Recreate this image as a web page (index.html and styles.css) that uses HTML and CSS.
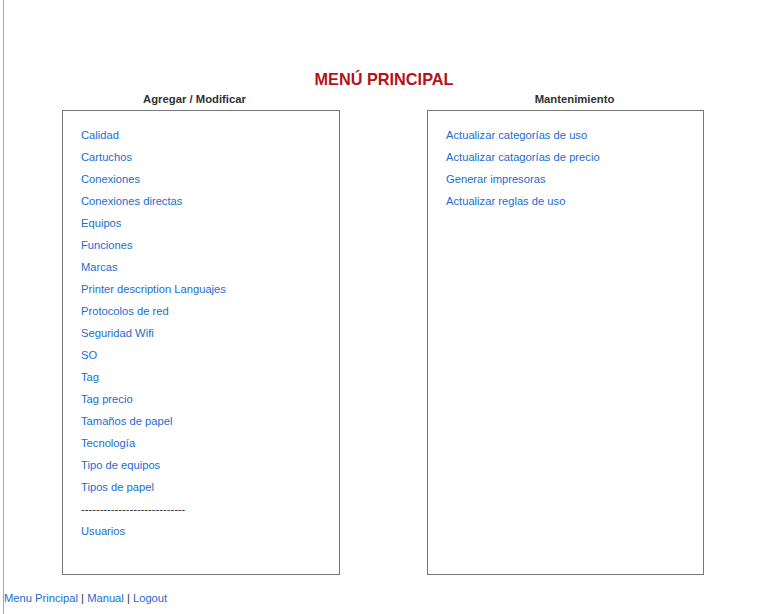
FILE: index.html
```html
<!DOCTYPE html>
<html lang="es">
<head>
<meta charset="utf-8">
<title>Menú principal</title>
<link rel="stylesheet" href="styles.css">
</head>
<body>
<div class="page">
  <h1 class="title">MENÚ PRINCIPAL</h1>
  <div class="columns">
    <h2 class="col-head">Agregar / Modificar</h2>
    <h2 class="col-head">Mantenimiento</h2>
    <div class="box box-left">
      <ul class="menu">
        <li><a href="#">Calidad</a></li>
        <li><a href="#">Cartuchos</a></li>
        <li><a href="#">Conexiones</a></li>
        <li><a href="#">Conexiones directas</a></li>
        <li><a href="#">Equipos</a></li>
        <li><a href="#">Funciones</a></li>
        <li><a href="#">Marcas</a></li>
        <li><a href="#">Printer description Languajes</a></li>
        <li><a href="#">Protocolos de red</a></li>
        <li><a href="#">Seguridad Wifi</a></li>
        <li><a href="#">SO</a></li>
        <li><a href="#">Tag</a></li>
        <li><a href="#">Tag precio</a></li>
        <li><a href="#">Tamaños de papel</a></li>
        <li><a href="#">Tecnología</a></li>
        <li><a href="#">Tipo de equipos</a></li>
        <li><a href="#">Tipos de papel</a></li>
        <li class="sep">----------------------------</li>
        <li><a href="#">Usuarios</a></li>
      </ul>
    </div>
    <div class="box box-right">
      <ul class="menu">
        <li><a href="#">Actualizar categorías de uso</a></li>
        <li><a href="#">Actualizar catagorías de precio</a></li>
        <li><a href="#">Generar impresoras</a></li>
        <li><a href="#">Actualizar reglas de uso</a></li>
      </ul>
    </div>
  </div>
  <div class="footer">
    <a href="#">Menu Principal</a> | <a href="#">Manual</a> | <a href="#">Logout</a>
  </div>
</div>
</body>
</html>
```

FILE: styles.css
```css
html, body {
  margin: 0;
  padding: 0;
  background: #fff;
}
body {
  font-family: "Liberation Sans", Arial, sans-serif;
  color: #333;
}
.page {
  margin-left: 3px;
  border-left: 1px solid #a8a8a8;
  min-height: 614px;
  box-sizing: border-box;
  padding-top: 70px;
}
.title {
  margin: 0;
  font-size: 16.3px;
  line-height: 18px;
  font-weight: bold;
  color: #b5121b;
  text-align: center;
}
.columns {
  display: grid;
  grid-template-columns: 381px 379px;
  grid-template-rows: auto auto;
  margin-top: 5px;
}
.col-head {
  margin: 0 0 4px 0;
  font-size: 11.3px;
  line-height: 13px;
  font-weight: bold;
  color: #333;
  text-align: center;
}
.box {
  border: 1px solid #777;
  box-sizing: border-box;
  padding: 13px 0 32px 18px;
}
.box-left {
  margin-left: 58px;
  width: 278px;
}
.box-right {
  margin-left: 42px;
  width: 277px;
}
.menu {
  list-style: none;
  margin: 0;
  padding: 0;
}
.menu li {
  font-size: 11.2px;
  line-height: 22px;
  color: #333;
}
a {
  color: #1a6dd0;
  text-decoration: none;
}
.footer {
  margin-top: 17px;
  font-size: 11.2px;
  line-height: 13px;
  color: #333;
}
```
